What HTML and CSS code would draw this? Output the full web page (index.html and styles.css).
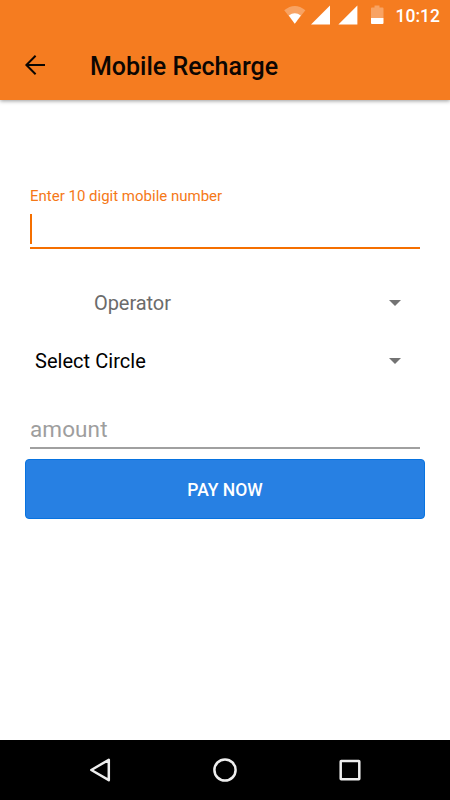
FILE: index.html
```html
<!DOCTYPE html>
<html lang="en">
<head>
<meta charset="utf-8">
<title>Mobile Recharge</title>
<link rel="stylesheet" href="styles.css">
</head>
<body>
<div class="screen">
  <header class="header">
    <div class="status">
      <svg class="status-icons" width="100" height="30" viewBox="0 0 100 30" fill="#fff">
        <path opacity=".3" d="M4.2 10.3Q14.8 1.7 25.4 10.3L14.8 23.8Z"/>
        <path d="M8.8 15.5Q14.8 11.2 20.8 15.5L14.8 23.8Z"/>
        <path d="M50 5.6V24.6H31Z"/>
        <path d="M77.4 5.6V24.6H58.4Z"/>
        <path opacity=".3" d="M94.5 5.5h5v2h3.1q.9 0 .9.9V18H91V8.4q0-.9.9-.9h2.6Z"/>
        <path d="M91 18h12.5v5.1q0 .9-.9.9H91.9q-.9 0-.9-.9Z"/>
      </svg>
      <span class="clock">10:12</span>
    </div>
    <div class="toolbar">
      <svg class="back" width="30" height="30" viewBox="0 0 30 30"><path d="M25 15H6.8M15.6 5.8L6.4 15l9.2 9.2"/></svg>
      <h1 class="title">Mobile Recharge</h1>
    </div>
  </header>
  <main class="form">
    <label class="label">Enter 10 digit mobile number</label>
    <div class="number-field"><span class="cursor"></span></div>
    <div class="select operator"><span>Operator</span><svg class="caret" width="12" height="6" viewBox="0 0 12 6"><path d="M0 0h12L6 6z"/></svg></div>
    <div class="select circle"><span>Select Circle</span><svg class="caret" width="12" height="6" viewBox="0 0 12 6"><path d="M0 0h12L6 6z"/></svg></div>
    <div class="amount">amount</div>
    <button class="pay">PAY NOW</button>
  </main>
  <nav class="nav">
    <svg width="30" height="30" viewBox="0 0 30 30"><path d="M23.8 4.8V25.2L6.3 15Z"/></svg>
    <svg width="30" height="30" viewBox="0 0 30 30"><circle cx="15" cy="15" r="10.6"/></svg>
    <svg width="30" height="30" viewBox="0 0 30 30"><rect x="5.7" y="5.9" width="18.6" height="18.4" rx=".5"/></svg>
  </nav>
</div>
</body>
</html>
```
FILE: styles.css
```css
* { box-sizing: border-box; }
body {
  margin: 0;
  background: #fff;
  font-family: Roboto, sans-serif;
}
.screen {
  width: 450px;
  height: 800px;
  display: flex;
  flex-direction: column;
  overflow: hidden;
}
.header {
  height: 100px;
  background: #f57c20;
  box-shadow: 0 1px 4px rgba(0, 0, 0, .4);
}
.status {
  height: 30px;
  display: flex;
  justify-content: flex-end;
  padding-right: 10px;
}
.status-icons { margin-right: 16px; overflow: visible; }
.clock {
  color: #fff;
  font-size: 17.5px;
  font-weight: 500;
  line-height: 32px;
}
.toolbar {
  height: 70px;
  display: flex;
  align-items: center;
  padding-left: 20px;
}
.back {
  fill: none;
  stroke: #0c0602;
  stroke-width: 2;
}
.title {
  margin: 4px 0 0 40px;
  font-size: 25px;
  font-weight: 500;
  line-height: 30px;
  color: #0c0602;
}
.form {
  flex: 1;
  display: flex;
  flex-direction: column;
  padding: 86px 25px 0;
}
.label {
  margin-left: 5px;
  font-size: 15px;
  line-height: 20px;
  color: #f57817;
}
.number-field {
  height: 43px;
  margin: 0 5px;
  padding-top: 8px;
  border-bottom: 2px solid #f56f00;
}
.cursor {
  display: block;
  width: 2px;
  height: 30px;
  background: #f56f00;
}
.select {
  display: flex;
  align-items: center;
  justify-content: space-between;
  font-size: 20px;
  line-height: 30px;
  padding-right: 24px;
}
.caret { fill: #737373; }
.operator { margin-top: 39px; padding-left: 69px; color: #6b6b6b; }
.operator span { letter-spacing: -.06px; }
.circle { margin-top: 28px; padding-left: 10px; color: #000; }
.circle span { padding-top: 1px; line-height: 29px; letter-spacing: .04px; }
.amount {
  height: 37px;
  margin: 36px 5px 0;
  border-bottom: 2px solid #a0a0a0;
  font-size: 22.5px;
  line-height: 34px;
  letter-spacing: .1px;
  color: #9e9e9e;
}
.pay {
  height: 60px;
  margin-top: 10px;
  padding: 2px 0 0;
  border: 1px solid #0873e0;
  border-radius: 4px;
  background: #2780e3;
  color: #fff;
  font: 500 17.5px Roboto, sans-serif;
}
.nav {
  height: 60px;
  display: flex;
  align-items: center;
  justify-content: space-between;
  padding: 0 85px;
  background: #000;
}
.nav svg {
  fill: none;
  stroke: #eee;
  stroke-width: 2.5;
  stroke-linejoin: round;
}
```
